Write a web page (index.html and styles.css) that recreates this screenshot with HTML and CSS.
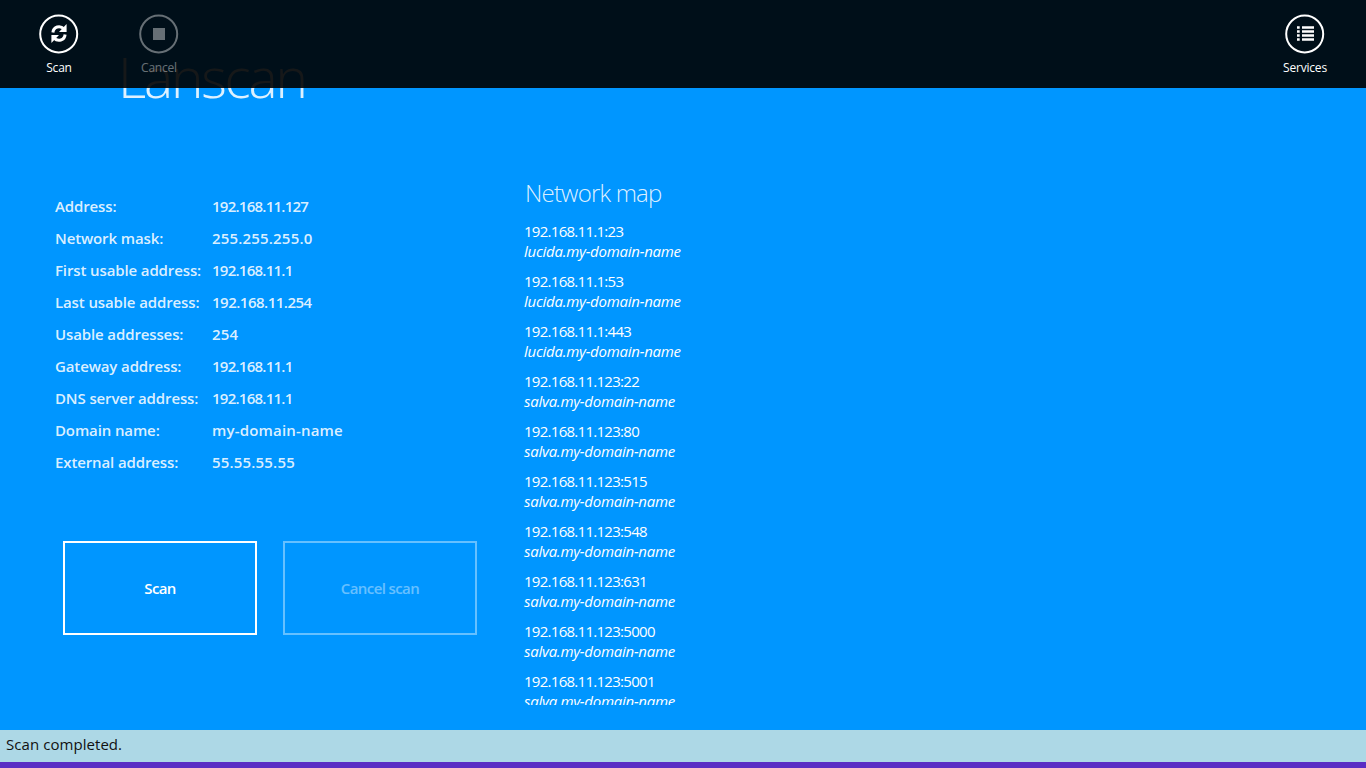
FILE: index.html
```
<!DOCTYPE html>
<html lang="en">
<head>
<meta charset="utf-8">
<title>Lanscan</title>
<link rel="stylesheet" href="styles.css">
</head>
<body>
<div class="app">
  <nav class="appbar">
    <button class="cmd">
      <svg class="cmd-icon" width="40" height="40" viewBox="0 0 40 40">
        <circle cx="19.700" cy="20" r="18.500" fill="none" stroke="#fff" stroke-width="2"/>
        <g fill="none" stroke="#fff" stroke-width="3"><path d="M13.900 18.500C14.500 12.500 21 11 25 14.800"/><path d="M26.100 20.500C25.500 26.500 19 28 15 24.200"/></g>
        <path fill="#fff" d="M27.600 10V18H20ZM12.400 29V21H20Z"/>
      </svg>
      <span class="cmd-label">Scan</span>
    </button>
    <button class="cmd cmd-disabled">
      <svg class="cmd-icon" width="40" height="40" viewBox="0 0 40 40">
        <circle cx="19.700" cy="20" r="18.500" fill="none" stroke="#fff" stroke-width="2"/>
        <path fill="#fff" d="M14 14h12v12H14z"/>
      </svg>
      <span class="cmd-label">Cancel</span>
    </button>
    <button class="cmd cmd-right">
      <svg class="cmd-icon" width="40" height="40" viewBox="0 0 40 40">
        <circle cx="19.700" cy="20" r="18.500" fill="none" stroke="#fff" stroke-width="2"/>
        <path fill="#fff" d="M12 12.200h2.700v2.500H12zM17 12.200h12v2.500H17zM12 16.200h2.700v2.500H12zM17 16.200h12v2.500H17zM12 20.200h2.700v2.500H12zM17 20.200h12v2.500H17zM12 24.200h2.700v2.500H12zM17 24.200h12v2.500H17z"/>
      </svg>
      <span class="cmd-label">Services</span>
    </button>
  </nav>
  <header class="header"><h1 class="title">Lanscan</h1></header>
  <main class="content">
    <section class="left">
      <dl class="info">
        <dt>Address:</dt><dd>192.168.11.127</dd>
        <dt>Network mask:</dt><dd class="wide">255.255.255.0</dd>
        <dt>First usable address:</dt><dd>192.168.11.1</dd>
        <dt>Last usable address:</dt><dd class="mid">192.168.11.254</dd>
        <dt>Usable addresses:</dt><dd class="wide">254</dd>
        <dt>Gateway address:</dt><dd>192.168.11.1</dd>
        <dt>DNS server address:</dt><dd>192.168.11.1</dd>
        <dt>Domain name:</dt><dd class="wide">my-domain-name</dd>
        <dt>External address:</dt><dd class="wide">55.55.55.55</dd>
      </dl>
      <div class="actions">
        <button class="action">Scan</button>
        <button class="action action-disabled">Cancel scan</button>
      </div>
    </section>
    <section class="map">
      <h2 class="map-title">Network map</h2>
      <ul class="hosts">
        <li><span>192.168.11.1:23</span><em>lucida.my-domain-name</em></li>
        <li><span>192.168.11.1:53</span><em>lucida.my-domain-name</em></li>
        <li><span>192.168.11.1:443</span><em>lucida.my-domain-name</em></li>
        <li><span>192.168.11.123:22</span><em>salva.my-domain-name</em></li>
        <li><span>192.168.11.123:80</span><em>salva.my-domain-name</em></li>
        <li><span>192.168.11.123:515</span><em>salva.my-domain-name</em></li>
        <li><span>192.168.11.123:548</span><em>salva.my-domain-name</em></li>
        <li><span>192.168.11.123:631</span><em>salva.my-domain-name</em></li>
        <li><span>192.168.11.123:5000</span><em>salva.my-domain-name</em></li>
        <li><span>192.168.11.123:5001</span><em>salva.my-domain-name</em></li>
      </ul>
    </section>
  </main>
  <footer class="status">Scan completed.</footer>
</div>
</body>
</html>
```
FILE: styles.css
```
* { box-sizing: border-box; margin: 0; padding: 0; }
body { font-family: "Open Sans", "Noto Sans", sans-serif; overflow: hidden; }
button { font: inherit; color: inherit; background: none; border: 0; }
.app { position: relative; display: flex; flex-direction: column; width: 1366px; height: 768px; background: #0096ff; color: #fff; }
.appbar { position: absolute; top: 0; left: 0; right: 0; z-index: 2; display: flex; height: 88px; padding: 14px 11px 0 9px; background: rgba(0, 0, 0, .9); }
.cmd { display: flex; flex-direction: column; align-items: center; width: 100px; }
.cmd-icon { display: block; }
.cmd-label { margin-top: 5px; font-size: 12px; line-height: 18px; letter-spacing: -.2px; }
.cmd-disabled { opacity: .4; }
.cmd-right { margin-left: auto; }
.header { height: 140px; padding: 39px 0 0 118px; }
.title { font-size: 55px; line-height: 76px; font-weight: 300; color: rgba(255, 255, 255, .87); letter-spacing: -2.2px; }
.content { display: flex; height: 590px; }
.left { width: 524px; padding: 50px 0 0 55px; }
.info { display: grid; grid-template-columns: 157px 1fr; grid-auto-rows: 32px; font-size: 15px; line-height: 32px; font-weight: 600; color: rgba(255, 255, 255, .87); white-space: nowrap; }
.info dt { letter-spacing: -.12px; }
.info dd { letter-spacing: -.75px; }
.info .mid { letter-spacing: -.5px; }
.info .wide { letter-spacing: .18px; }
.actions { display: flex; gap: 26px; padding: 63px 0 0 8px; }
.action { width: 194px; height: 94px; border: 2px solid #fff; font-size: 15px; font-weight: 600; letter-spacing: -.6px; }
.action-disabled { opacity: .4; }
.map { width: 300px; height: 565px; padding-top: 36px; overflow: hidden; }
.map-title { height: 45px; padding-left: 1px; font-size: 24px; line-height: 34px; font-weight: 300; color: rgba(255, 255, 255, .87); letter-spacing: -.8px; }
.hosts { list-style: none; font-size: 15px; line-height: 20px; letter-spacing: -.72px; }
.hosts li { height: 50px; }
.hosts span, .hosts em { display: block; white-space: nowrap; }
.hosts em { letter-spacing: -.25px; }
.status { height: 38px; padding-left: 6px; font-size: 15px; line-height: 29px; letter-spacing: .06px; background: #add8e6; color: #111; border-bottom: 6px solid #5a2dc4; }
```
